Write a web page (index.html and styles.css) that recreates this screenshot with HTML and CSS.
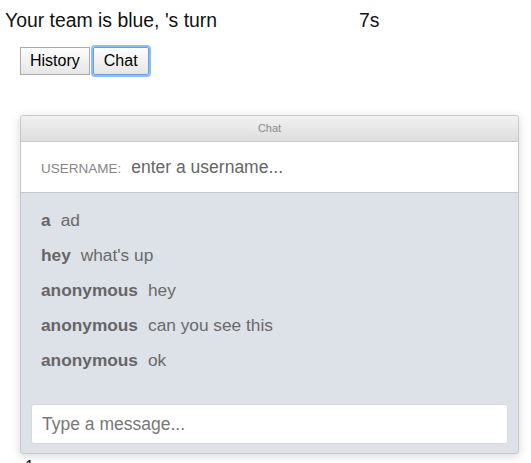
FILE: index.html
```html
<!DOCTYPE html>
<html>
<head>
<meta charset="utf-8">
<link rel="stylesheet" href="styles.css">
</head>
<body>
<div class="status">
  <span class="turn">Your team is blue, 's turn</span>
  <span class="timer">7s</span>
</div>
<div class="tabs">
  <button class="tab">History</button>
  <button class="tab active">Chat</button>
</div>
<div class="chat">
  <div class="chat-header">Chat</div>
  <div class="user-row">
    <span class="user-label">USERNAME:</span>
    <input class="user-input" type="text" placeholder="enter a username...">
  </div>
  <div class="messages">
    <ul class="message-list">
      <li class="message"><b class="author">a</b><span class="text">ad</span></li>
      <li class="message"><b class="author">hey</b><span class="text">what's up</span></li>
      <li class="message"><b class="author">anonymous</b><span class="text">hey</span></li>
      <li class="message"><b class="author">anonymous</b><span class="text">can you see this</span></li>
      <li class="message"><b class="author">anonymous</b><span class="text">ok</span></li>
    </ul>
    <input class="msg-input" type="text" placeholder="Type a message...">
  </div>
</div>
<div class="below">1</div>
</body>
</html>
```
FILE: styles.css
```css
html, body {
  margin: 0;
  padding: 0;
  background: #fff;
  font-family: "Liberation Sans", Arial, sans-serif;
}

.status {
  display: grid;
  grid-template-columns: 354px auto;
  padding: 9px 0 0 5px;
  font-size: 19.4px;
  line-height: 22px;
  color: #111;
}

.tabs {
  display: flex;
  gap: 3px;
  padding: 16px 0 0 20px;
}

.tab {
  font-family: "Liberation Sans", Arial, sans-serif;
  font-size: 16px;
  height: 28px;
  padding: 0 9px;
  margin: 0;
  border: 1px solid #aaa;
  border-radius: 0;
  background: linear-gradient(#fdfdfd, #e6e6e6);
  color: #000;
}

.tab.active {
  padding: 0 10px;
  border: 1px solid #6a9fe6;
  border-radius: 2px;
  box-shadow: 0 0 0 2px #8fbcf4;
  outline: none;
}

.chat {
  margin: 40px 0 0 20px;
  width: 497px;
  border: 1px solid #c9c9c9;
  border-radius: 3px;
  box-shadow: 0 2px 10px rgba(0, 0, 0, 0.16);
  background: #dde1e8;
  overflow: hidden;
}

.chat-header {
  height: 25px;
  line-height: 25px;
  text-align: center;
  font-size: 11px;
  color: #8a8a8a;
  background: linear-gradient(#f1f1f1, #dedede);
  border-bottom: 1px solid #cbcbcb;
}

.user-row {
  display: flex;
  align-items: center;
  height: 50px;
  padding: 0 20px;
  background: #fff;
  border-bottom: 1px solid #c8c8c8;
}

.user-label {
  font-size: 13.5px;
  color: #858585;
  margin-right: 10px;
  padding-top: 2px;
}

.user-input {
  flex: 1;
  border: none;
  outline: none;
  padding: 0;
  font-family: "Liberation Sans", Arial, sans-serif;
  font-size: 17.5px;
  color: #555;
  background: transparent;
}

.user-input::placeholder {
  color: #666;
}

.messages {
  padding: 10px 10px 9px 10px;
}

.message-list {
  list-style: none;
  margin: 0;
  padding: 0 10px;
  font-size: 17.3px;
  line-height: 35px;
  color: #6a6a6a;
}

.author {
  color: #666;
  margin-right: 10px;
}

.msg-input {
  display: block;
  box-sizing: border-box;
  width: 100%;
  height: 40px;
  margin-top: 26px;
  padding: 0 10px;
  border: 1px solid #d6d9de;
  border-radius: 3px;
  background: #fff;
  font-family: "Liberation Sans", Arial, sans-serif;
  font-size: 17.5px;
  outline: none;
}

.msg-input::placeholder {
  color: #777;
}

.below {
  padding: 4px 0 0 25px;
  font-size: 16px;
  color: #111;
}
```
